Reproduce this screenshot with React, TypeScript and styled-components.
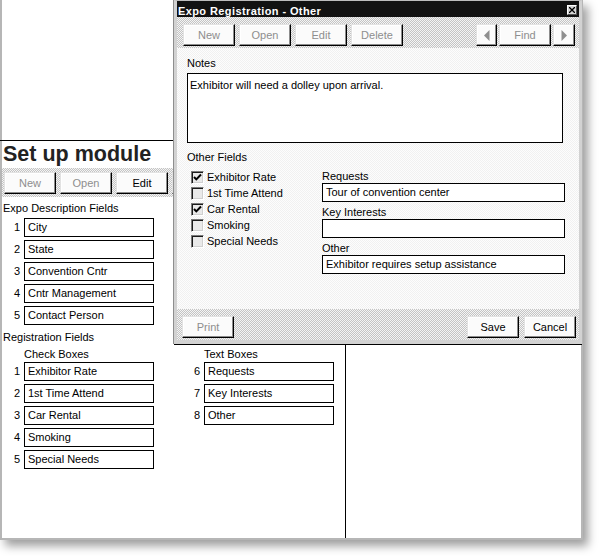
import React from "react";
import styled, { createGlobalStyle, css } from "styled-components";

const Global = createGlobalStyle`
  html, body { margin: 0; padding: 0; background: #fff; }
  body { font-family: "Liberation Sans", Arial, sans-serif; font-size: 11px; color: #000; }
  * { box-sizing: border-box; }
`;

const hatch = css`
  background: repeating-conic-gradient(#c4c4c4 0 25%, #f4f4f4 0 50%) 0 0 / 2px 2px;
`;

const Stage = styled.div`
  width: 599px;
  height: 556px;
  overflow: hidden;
  background: #fff;
`;

const Window = styled.div`
  position: relative;
  width: 583px;
  height: 540px;
  border: 2px solid #b6b6b6;
  border-top: none;
  background: #fff;
  box-shadow: 5px 6px 9px rgba(0, 0, 0, 0.38);
  display: flex;
  flex-direction: column;
`;

const TopBlank = styled.div`
  height: 141px;
  border-bottom: 1px solid #000;
  margin-left: -2px;
`;

const Heading = styled.h1`
  margin: 0;
  height: 27px;
  padding-left: 1px;
  font: bold 21.5px/27px "Liberation Sans", Arial, sans-serif;
  color: #222;
`;

const Toolbar = styled.div<{ $pad: string }>`
  ${hatch};
  display: flex;
  align-items: flex-start;
  gap: 4px;
  padding: ${(p) => p.$pad};
`;

const Button = styled.button<{ $w?: number; $off?: boolean }>`
  flex: none;
  width: ${(p) => p.$w ?? 52}px;
  height: 22px;
  margin: 0;
  padding: 0;
  font: 11px "Liberation Sans", Arial, sans-serif;
  color: ${(p) => (p.$off ? "#8e8e8e" : "#000")};
  background: #fbfbfb;
  border: 1px solid;
  border-color: #e2e2e2 #000 #000 #e2e2e2;
  box-shadow: inset -1px -1px 0 #8c8c8c, inset 1px 1px 0 #fff;
  display: flex;
  align-items: center;
  justify-content: center;
`;

const Spacer = styled.div`
  flex: 1;
`;

const Body = styled.div`
  flex: 1;
  display: grid;
  grid-template-columns: 344px 1fr;
`;

const LeftCol = styled.div`
  border-right: 1px solid #000;
  padding-top: 4px;
`;

const SectionLabel = styled.div<{ $mt?: number }>`
  line-height: 14px;
  padding-left: 1px;
  margin-top: ${(p) => p.$mt ?? 0}px;
`;

const SubLabel = styled.div`
  line-height: 14px;
  padding-left: 22px;
  margin-top: 3px;
`;

const FieldList = styled.div<{ $mt: number }>`
  display: flex;
  flex-direction: column;
  gap: 3px;
  margin-top: ${(p) => p.$mt}px;
`;

const FieldRow = styled.div`
  display: grid;
  grid-template-columns: 18px 130px;
  column-gap: 4px;
  height: 19px;
  align-items: center;
`;

const Num = styled.span`
  text-align: right;
  line-height: 19px;
`;

const Box = styled.div`
  height: 19px;
  border: 1px solid #000;
  background: #fff;
  padding-left: 3px;
  line-height: 17px;
  white-space: nowrap;
  overflow: hidden;
`;

const RegGrid = styled.div`
  display: grid;
  grid-template-columns: 180px 1fr;
`;

/* ---------- dialog ---------- */

const Dialog = styled.div`
  position: absolute;
  left: 172px;
  top: 0;
  width: 408px;
  border: 3px solid #d2d2d2;
  border-top-width: 1px;
  border-bottom-width: 4px;
  border-top-color: #bdbdbd;
  box-shadow: -1px 0 0 #8e8e8e, 0 1px 0 #000;
  display: flex;
  flex-direction: column;
  background: #fff;
`;

const TitleBar = styled.div`
  height: 16px;
  background: #121212;
  color: #fff;
  display: flex;
  align-items: flex-start;
  padding: 0 2px 0 1px;
`;

const Title = styled.span`
  font: bold 11px/12px "Liberation Sans", Arial, sans-serif;
  letter-spacing: 0.4px;
  padding-top: 4px;
`;

const CloseBox = styled.span`
  margin-top: 4px;
  width: 10px;
  height: 10px;
  background: #d6d6d6;
  border: 1px solid;
  border-color: #fff #555 #555 #fff;
  display: flex;
  align-items: center;
  justify-content: center;
`;

const Content = styled.div`
  height: 261px;
  padding: 8px 0 0 10px;
  background: repeating-conic-gradient(#f1f1f1 0 25%, #fdfdfd 0 50%) 0 0 / 2px 2px;
`;

const Label = styled.div<{ $mt?: number }>`
  line-height: 14px;
  margin-top: ${(p) => p.$mt ?? 0}px;
`;

const NotesBox = styled.div`
  width: 376px;
  height: 70px;
  margin-top: 3px;
  border: 1px solid #000;
  background: #fff;
  padding: 5px 2px;
  line-height: 13px;
`;

const FieldsRow = styled.div`
  display: flex;
  margin-top: 2px;
`;

const CheckList = styled.div`
  width: 135px;
  padding: 3px 0 0 4px;
  display: flex;
  flex-direction: column;
`;

const CheckRow = styled.div`
  height: 16px;
  display: flex;
  align-items: center;
  gap: 3px;
`;

const CheckBox = styled.span`
  flex: none;
  width: 13px;
  height: 13px;
  background: #e9e9e9;
  border: 1px solid;
  border-color: #7a7a7a #fff #fff #7a7a7a;
  box-shadow: inset 1px 1px 0 #1a1a1a, inset -1px -1px 0 #d0d0d0;
  display: flex;
  align-items: center;
  justify-content: center;
`;

const CheckText = styled.span`
  line-height: 16px;
  white-space: nowrap;
`;

const RightCol = styled.div`
  width: 243px;
  display: flex;
  flex-direction: column;
`;

const FieldLabel = styled.div`
  height: 17px;
  padding-top: 3px;
  line-height: 14px;
`;

const Input = styled.div`
  height: 19px;
  border: 1px solid #000;
  background: #fff;
  padding-left: 3px;
  line-height: 17px;
  white-space: nowrap;
`;

const Check = () => (
  <svg width="9" height="9" viewBox="0 0 9 9">
    <path d="M1 4 L3.3 6.4 L8 1.5" fill="none" stroke="#000" strokeWidth="2" />
  </svg>
);

const Tri = ({ dir }: { dir: "l" | "r" }) => (
  <svg width="6" height="11" viewBox="0 0 6 11">
    <polygon points={dir === "l" ? "5.5,0 5.5,11 0,5.5" : "0.5,0 0.5,11 6,5.5"} fill="#8e8e8e" />
  </svg>
);

const descFields = ["City", "State", "Convention Cntr", "Cntr Management", "Contact Person"];
const checkFields = ["Exhibitor Rate", "1st Time Attend", "Car Rental", "Smoking", "Special Needs"];
const textFields = ["Requests", "Key Interests", "Other"];
const checked = [true, false, true, false, false];
const values = ["Tour of convention center", "", "Exhibitor requires setup assistance"];

export default function App() {
  return (
    <Stage>
      <Global />
      <Window>
        <TopBlank />
        <Heading>Set up module</Heading>
        <Toolbar $pad="4px 2px 3px 2px">
          <Button $off>New</Button>
          <Button $off>Open</Button>
          <Button>Edit</Button>
          <Button>Delete</Button>
        </Toolbar>
        <Body>
          <LeftCol>
            <SectionLabel>Expo Description Fields</SectionLabel>
            <FieldList $mt={3}>
              {descFields.map((f, i) => (
                <FieldRow key={f}>
                  <Num>{i + 1}</Num>
                  <Box>{f}</Box>
                </FieldRow>
              ))}
            </FieldList>
            <SectionLabel $mt={5}>Registration Fields</SectionLabel>
            <RegGrid>
              <div>
                <SubLabel>Check Boxes</SubLabel>
                <FieldList $mt={1}>
                  {checkFields.map((f, i) => (
                    <FieldRow key={f}>
                      <Num>{i + 1}</Num>
                      <Box>{f}</Box>
                    </FieldRow>
                  ))}
                </FieldList>
              </div>
              <div>
                <SubLabel>Text Boxes</SubLabel>
                <FieldList $mt={1}>
                  {textFields.map((f, i) => (
                    <FieldRow key={f}>
                      <Num>{i + 6}</Num>
                      <Box>{f}</Box>
                    </FieldRow>
                  ))}
                </FieldList>
              </div>
            </RegGrid>
          </LeftCol>
          <div />
        </Body>

        <Dialog>
          <TitleBar>
            <Title>Expo Registration - Other</Title>
            <Spacer />
            <CloseBox>
              <svg width="6" height="6" viewBox="0 0 6 6">
                <path d="M0 0 L6 6 M6 0 L0 6" stroke="#000" strokeWidth="1.3" />
              </svg>
            </CloseBox>
          </TitleBar>
          <Toolbar $pad="7px 4px 2px 6px">
            <Button $off>New</Button>
            <Button $off>Open</Button>
            <Button $off>Edit</Button>
            <Button $off>Delete</Button>
            <Spacer />
            <Button $w={21} $off>
              <Tri dir="l" />
            </Button>
            <Button $off style={{ marginLeft: -2 }}>Find</Button>
            <Button $w={22} $off style={{ marginLeft: -2 }}>
              <Tri dir="r" />
            </Button>
          </Toolbar>
          <Content>
            <Label>Notes</Label>
            <NotesBox>Exhibitor will need a dolley upon arrival.</NotesBox>
            <Label $mt={7}>Other Fields</Label>
            <FieldsRow>
              <CheckList>
                {checkFields.map((f, i) => (
                  <CheckRow key={f}>
                    <CheckBox>{checked[i] && <Check />}</CheckBox>
                    <CheckText>{f}</CheckText>
                  </CheckRow>
                ))}
              </CheckList>
              <RightCol>
                {textFields.map((f, i) => (
                  <React.Fragment key={f}>
                    <FieldLabel>{f}</FieldLabel>
                    <Input>{values[i]}</Input>
                  </React.Fragment>
                ))}
              </RightCol>
            </FieldsRow>
          </Content>
          <Toolbar $pad="7px 3px 2px 5px">
            <Button $off>Print</Button>
            <Spacer />
            <Button>Save</Button>
            <Button style={{ marginLeft: 1 }}>Cancel</Button>
          </Toolbar>
        </Dialog>
      </Window>
    </Stage>
  );
}
